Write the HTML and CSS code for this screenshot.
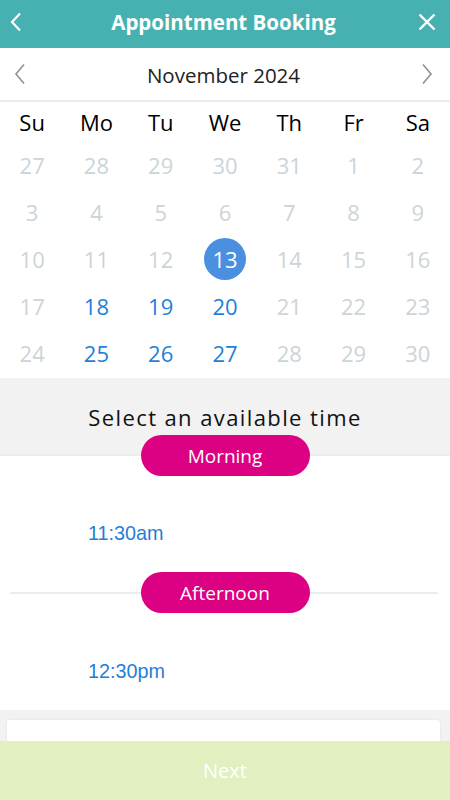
FILE: index.html
```html
<!DOCTYPE html>
<html>
<head>
<meta charset="utf-8">
<link rel="stylesheet" href="styles.css">
</head>
<body>
<div class="app">
  <header class="topbar">
    <button class="icon-btn" aria-label="Back">
      <svg width="12" height="20" viewBox="0 0 12 20"><path d="M10 1.5 L2 10 L10 18.5" fill="none" stroke="#fff" stroke-width="2.2"/></svg>
    </button>
    <h1 class="title">Appointment Booking</h1>
    <button class="icon-btn" aria-label="Close">
      <svg width="18" height="18" viewBox="0 0 18 18"><path d="M1.5 1.5 L16.5 16.5 M16.5 1.5 L1.5 16.5" fill="none" stroke="#fff" stroke-width="2.4"/></svg>
    </button>
  </header>

  <div class="month-nav">
    <svg class="chev" width="12" height="22" viewBox="0 0 12 22"><path d="M10 1.5 L2 11 L10 20.5" fill="none" stroke="#8a9298" stroke-width="1.6"/></svg>
    <div class="month">November 2024</div>
    <svg class="chev" width="12" height="22" viewBox="0 0 12 22"><path d="M2 1.5 L10 11 L2 20.5" fill="none" stroke="#8a9298" stroke-width="1.6"/></svg>
  </div>

  <div class="calendar">
    <div class="wd">Su</div><div class="wd">Mo</div><div class="wd">Tu</div><div class="wd">We</div><div class="wd">Th</div><div class="wd">Fr</div><div class="wd">Sa</div>

    <div class="day">27</div><div class="day">28</div><div class="day">29</div><div class="day">30</div><div class="day">31</div><div class="day">1</div><div class="day">2</div>
    <div class="day">3</div><div class="day">4</div><div class="day">5</div><div class="day">6</div><div class="day">7</div><div class="day">8</div><div class="day">9</div>
    <div class="day">10</div><div class="day">11</div><div class="day">12</div><div class="day"><span class="sel">13</span></div><div class="day">14</div><div class="day">15</div><div class="day">16</div>
    <div class="day">17</div><div class="day avail">18</div><div class="day avail">19</div><div class="day avail">20</div><div class="day">21</div><div class="day">22</div><div class="day">23</div>
    <div class="day">24</div><div class="day avail">25</div><div class="day avail">26</div><div class="day avail">27</div><div class="day">28</div><div class="day">29</div><div class="day">30</div>
  </div>

  <section class="times">
    <div class="times-head">Select an available time</div>

    <div class="group first">
      <div class="group-head"><span class="pill">Morning</span></div>
      <div class="slot">11:30am</div>
    </div>

    <div class="group">
      <div class="group-head line"><span class="pill">Afternoon</span></div>
      <div class="slot">12:30pm</div>
    </div>
  </section>

  <div class="footer">
    <div class="card"></div>
  </div>

  <button class="next">Next</button>
</div>
</body>
</html>
```

FILE: styles.css
```css
* { box-sizing: border-box; }
html, body { margin: 0; padding: 0; }
body {
  width: 450px;
  height: 800px;
  overflow: hidden;
  background: #fff;
  font-family: "Open Sans", "DejaVu Sans", sans-serif;
  color: #000;
}
.app { position: relative; width: 450px; height: 800px; }

.topbar {
  height: 48px;
  background: #47b1b1;
  display: flex;
  align-items: center;
  justify-content: space-between;
  padding: 0 10px 0 3px;
}
.icon-btn {
  background: none;
  border: 0;
  padding: 0;
  width: 26px;
  height: 26px;
  margin-top: -4px;
  display: flex;
  align-items: center;
  justify-content: center;
}
.title {
  margin: 0 0 4px 4px;
  font-size: 20.5px;
  font-weight: 700;
  color: #fff;
  line-height: 1;
}

.month-nav {
  height: 54px;
  display: flex;
  align-items: center;
  justify-content: space-between;
  padding: 0 17px 0 14px;
  border-bottom: 2px solid #e9edf0;
}
.month { font-size: 20.5px; color: #222; padding-top: 1px; }

.calendar {
  display: grid;
  grid-template-columns: repeat(7, 1fr);
  grid-auto-rows: 47px;
  grid-template-rows: 39px;
}
.wd {
  display: flex;
  align-items: center;
  justify-content: center;
  font-size: 22px;
  color: #000;
}
.day {
  display: flex;
  align-items: center;
  justify-content: center;
  font-size: 22px;
  color: #ccd4d8;
}
.day.avail { color: #1f7fd8; }
.sel {
  width: 42px;
  height: 42px;
  border-radius: 50%;
  background: #4a8fe0;
  color: #fff;
  display: flex;
  align-items: center;
  justify-content: center;
}

.times { padding-top: 2px; }
.times-head {
  background: #f2f2f2;
  height: 78px;
  border-bottom: 2px solid #e9edf0;
  display: flex;
  justify-content: center;
  padding-top: 24px;
  font-size: 22px;
  letter-spacing: 1.4px;
  color: #111;
}
.group-head {
  position: relative;
  height: 41px;
  display: flex;
  justify-content: center;
}
.group.first .group-head { margin-top: -21px; }
.group-head.line::before {
  content: "";
  position: absolute;
  left: 10px;
  right: 12px;
  top: 20px;
  height: 2px;
  background: #e9edf0;
}
.pill {
  position: relative;
  width: 169px;
  height: 41px;
  border-radius: 21px;
  background: #dc0082;
  color: #fff;
  font-size: 19px;
  display: flex;
  align-items: center;
  justify-content: center;
}
.slot {
  height: 96px;
  padding-left: 88px;
  padding-top: 18px;
  display: flex;
  align-items: center;
  font-family: "Liberation Sans", Arial, sans-serif;
  font-size: 19.8px;
  color: #1f7fd8;
}
.group + .group .slot { height: 97px; padding-top: 20px; }

.footer {
  background: #f2f2f2;
  height: 91px;
  padding: 10px 10px 0 7px;
}
.card {
  background: #fff;
  height: 100%;
  border-radius: 3px 3px 0 0;
  box-shadow: 0 0 3px rgba(0,0,0,0.08);
}

.next {
  position: absolute;
  left: 0;
  right: 0;
  bottom: 0;
  height: 59px;
  border: 0;
  background: #e1efc1;
  color: #fff;
  font-family: "Open Sans", sans-serif;
  font-size: 20px;
  padding: 0 0 1px;
}
```
